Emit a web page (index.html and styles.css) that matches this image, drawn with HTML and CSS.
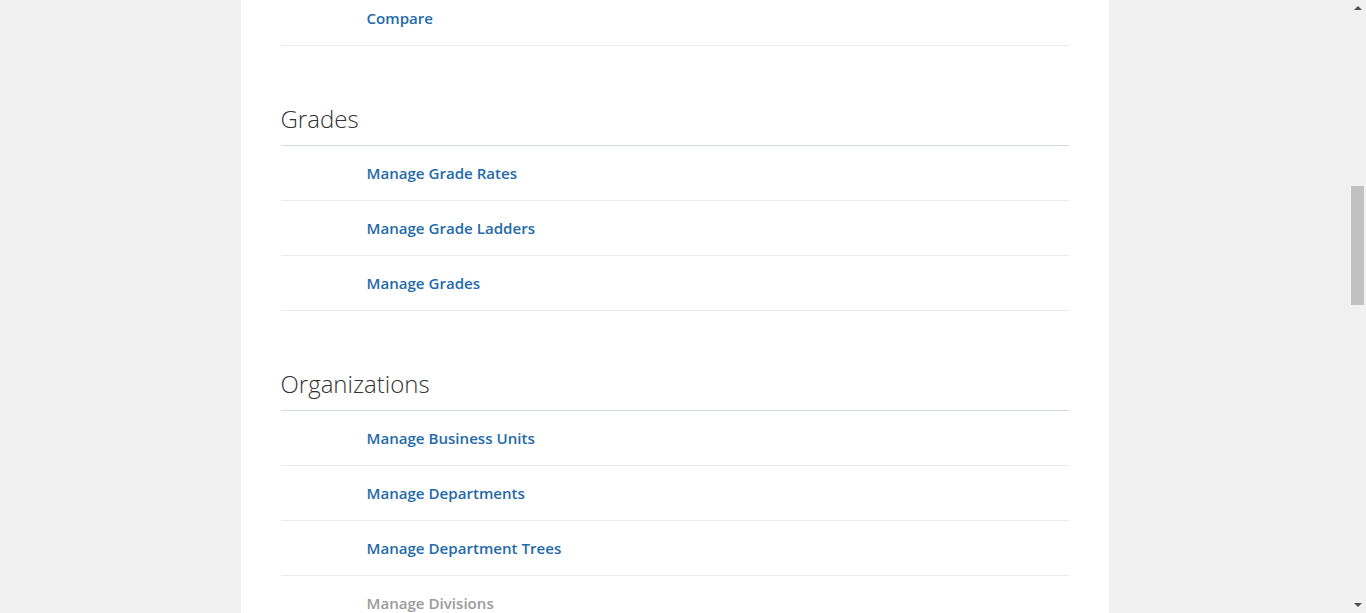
FILE: index.html
```html
<!DOCTYPE html>
<html lang="en">
<head>
<meta charset="utf-8">
<title>Workforce Structures</title>
<link rel="stylesheet" href="styles.css">
</head>
<body>
<div class="page">
  <div class="panel">
    <ul class="rows">
      <li class="row"><a class="link" href="#">Compare</a></li>
    </ul>

    <section class="group">
      <h2 class="group-title">Grades</h2>
      <ul class="rows">
        <li class="row"><a class="link" href="#">Manage Grade Rates</a></li>
        <li class="row"><a class="link" href="#">Manage Grade Ladders</a></li>
        <li class="row"><a class="link" href="#">Manage Grades</a></li>
      </ul>
    </section>

    <section class="group">
      <h2 class="group-title">Organizations</h2>
      <ul class="rows">
        <li class="row"><a class="link" href="#">Manage Business Units</a></li>
        <li class="row"><a class="link" href="#">Manage Departments</a></li>
        <li class="row"><a class="link" href="#">Manage Department Trees</a></li>
        <li class="row"><span class="link link-disabled">Manage Divisions</span></li>
      </ul>
    </section>
  </div>
</div>

<div class="scrollbar" aria-hidden="true">
  <span class="sb-arrow sb-up"></span>
  <span class="sb-thumb"></span>
  <span class="sb-arrow sb-down"></span>
</div>
</body>
</html>
```

FILE: styles.css
```css
html, body {
  margin: 0;
  padding: 0;
  height: 613px;
  overflow: hidden;
}

body {
  background: #f0f0f0;
  font-family: "Open Sans", "Noto Sans", sans-serif;
}

.page {
  width: 1349px;
}

.panel {
  width: 788px;
  margin: -9px auto 0;
  padding: 0 40px;
  background: #ffffff;
  min-height: 700px;
}

.rows {
  list-style: none;
  margin: 0;
  padding: 0;
}

.row {
  height: 54px;
  display: flex;
  align-items: center;
  padding-left: 86px;
  border-bottom: 1px solid #ebebeb;
}

.link {
  font-size: 15.1px;
  font-weight: 600;
  color: #1f6aab;
  text-decoration: none;
}

.link-disabled {
  color: #9a9a9a;
}

.group-title {
  margin: 57px 0 0;
  padding: 0 0 10px;
  font-size: 24px;
  line-height: 32px;
  font-weight: 300;
  color: #333333;
  border-bottom: 1px solid #d3d9e0;
}

.scrollbar {
  position: fixed;
  top: 0;
  right: 0;
  width: 17px;
  height: 613px;
  background: #f1f1f1;
}

.sb-thumb {
  position: absolute;
  left: 2px;
  top: 186px;
  width: 13px;
  height: 119px;
  background: #c1c1c1;
}

.sb-arrow {
  position: absolute;
  left: 5px;
  width: 0;
  height: 0;
  border-left: 4px solid transparent;
  border-right: 4px solid transparent;
}

.sb-up {
  top: 6px;
  border-bottom: 4px solid #505050;
}

.sb-down {
  bottom: 6px;
  border-top: 4px solid #505050;
}
```
